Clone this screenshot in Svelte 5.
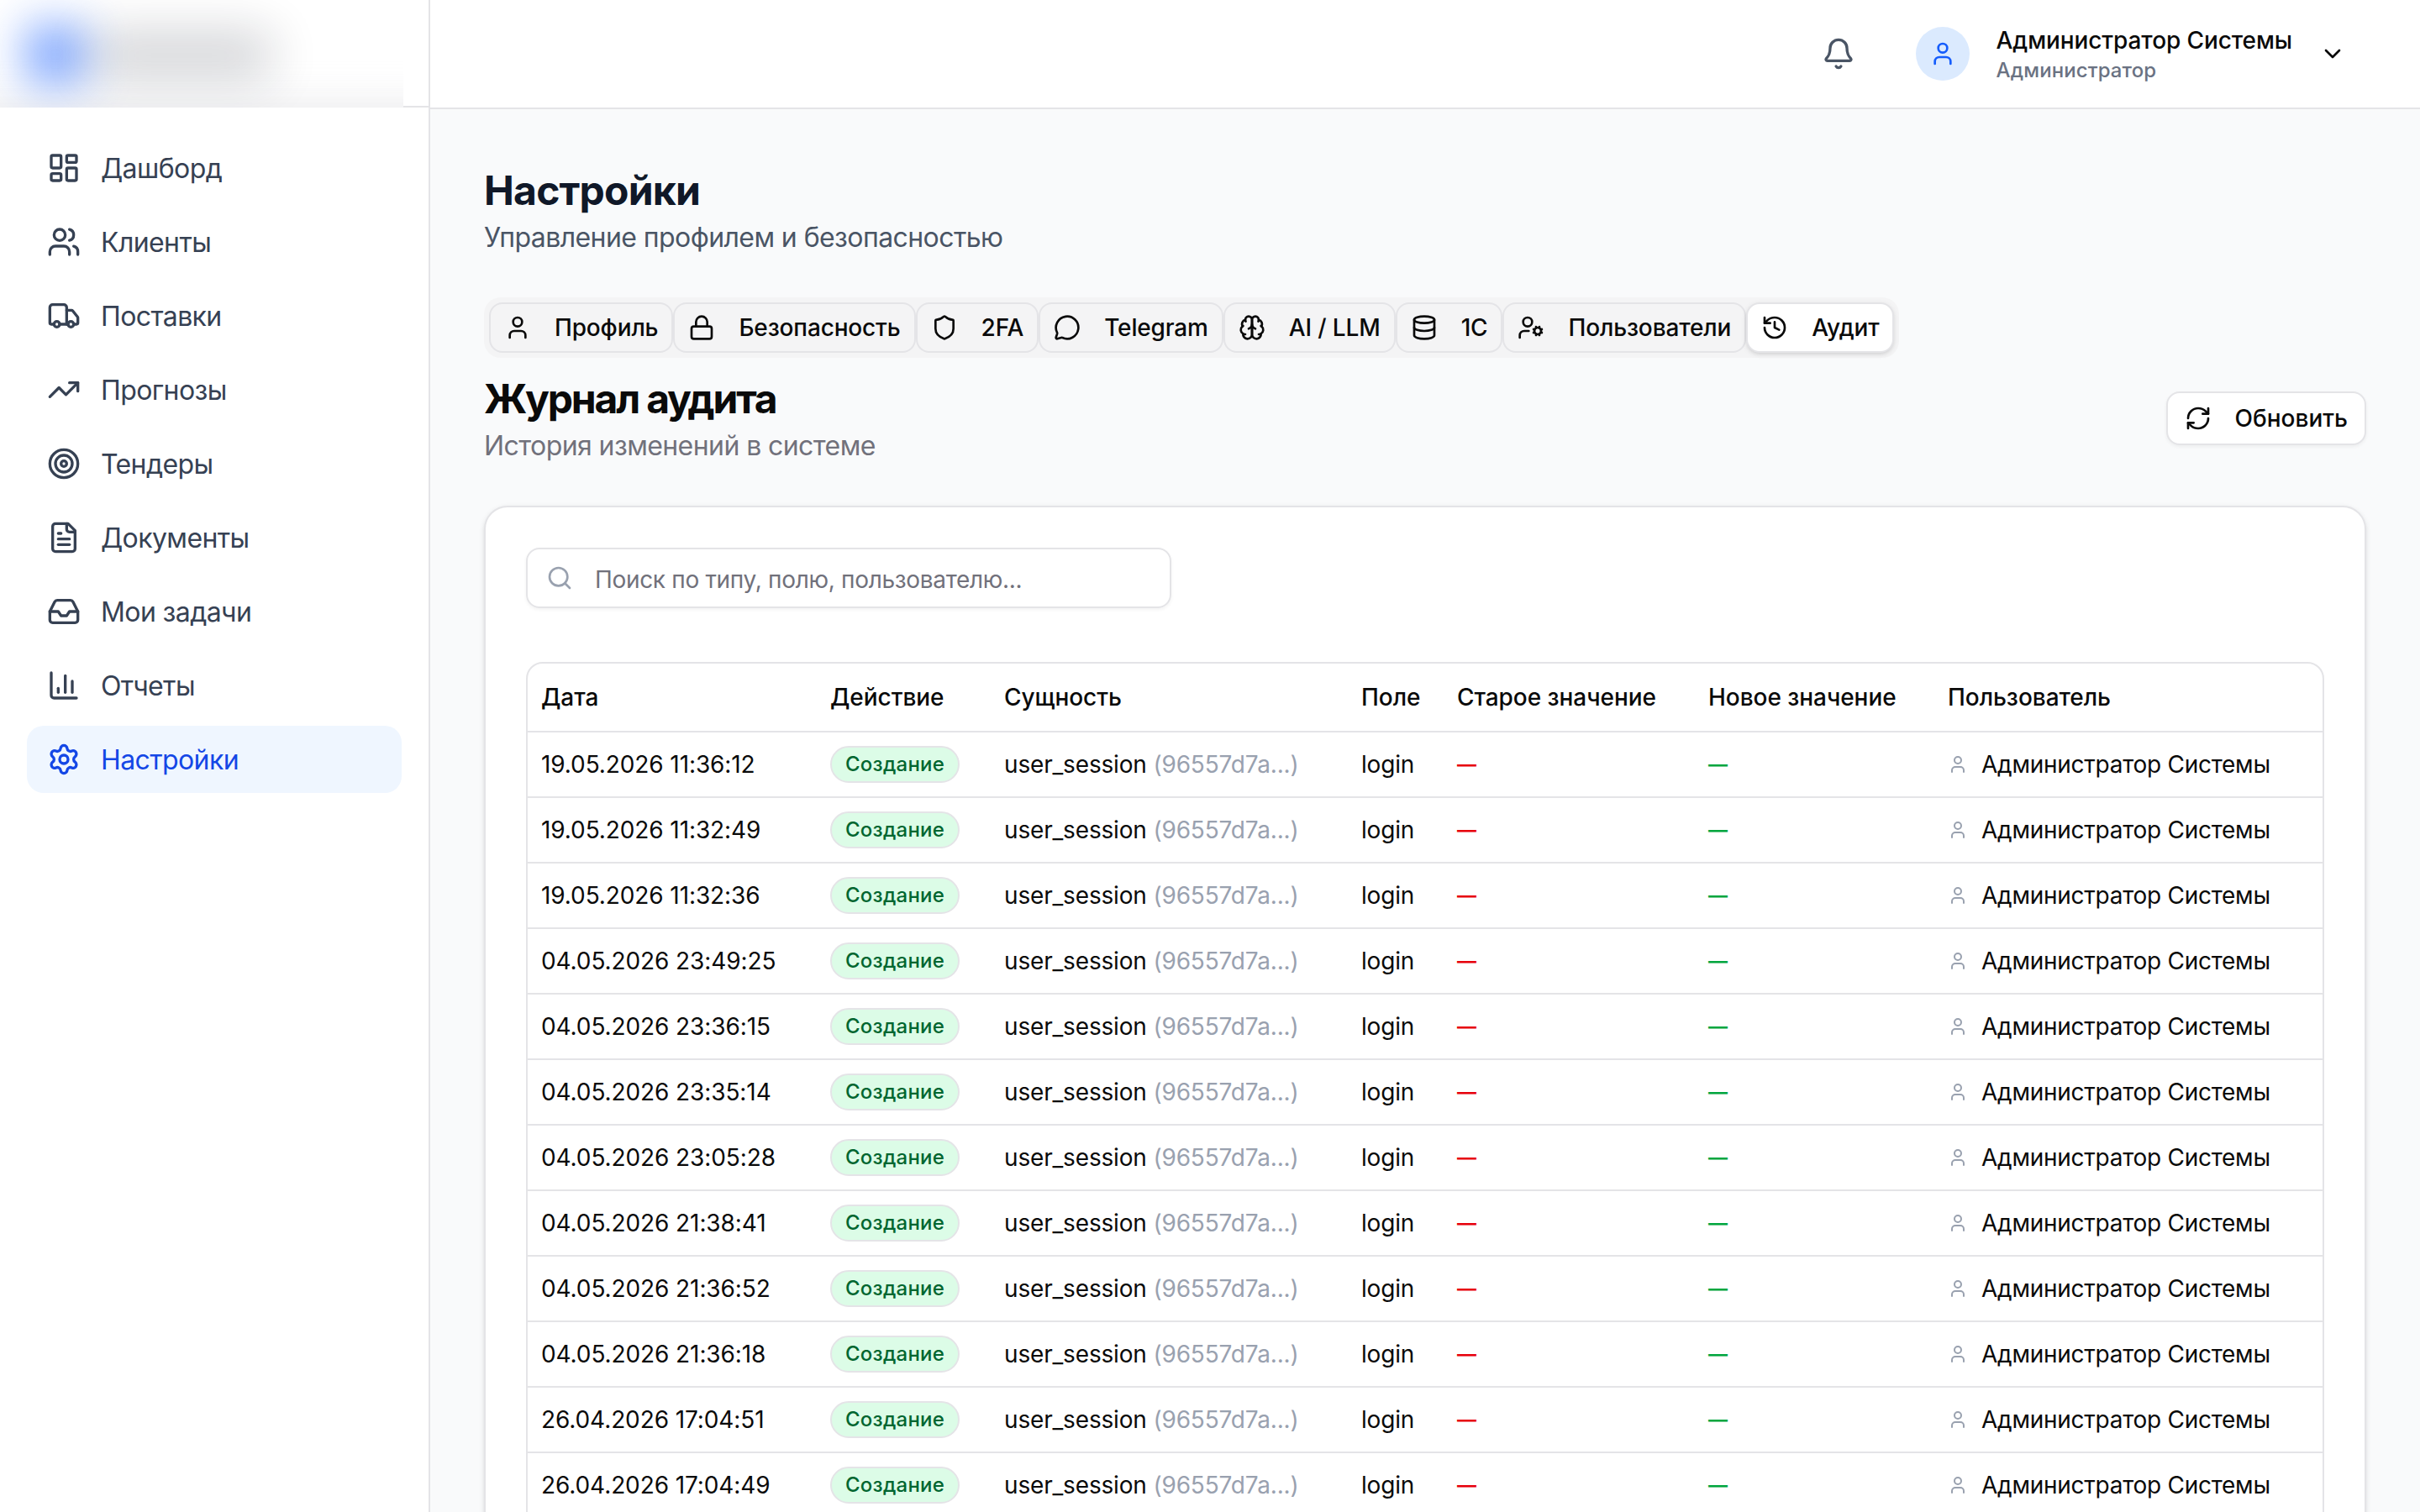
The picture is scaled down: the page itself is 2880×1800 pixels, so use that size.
<script lang="ts">
    type IconName = keyof typeof icons;

    const icons = {
        dashboard:
            '<rect width="7" height="9" x="3" y="3" rx="1"/><rect width="7" height="5" x="14" y="3" rx="1"/><rect width="7" height="9" x="14" y="12" rx="1"/><rect width="7" height="5" x="3" y="16" rx="1"/>',
        users: '<path d="M16 21v-2a4 4 0 0 0-4-4H6a4 4 0 0 0-4 4v2"/><path d="M16 3.128a4 4 0 0 1 0 7.744"/><path d="M22 21v-2a4 4 0 0 0-3-3.87"/><circle cx="9" cy="7" r="4"/>',
        truck: '<path d="M14 18V6a2 2 0 0 0-2-2H4a2 2 0 0 0-2 2v11a1 1 0 0 0 1 1h2"/><path d="M15 18H9"/><path d="M19 18h2a1 1 0 0 0 1-1v-3.65a1 1 0 0 0-.22-.624l-3.48-4.35A1 1 0 0 0 17.52 8H14"/><circle cx="17" cy="18" r="2"/><circle cx="7" cy="18" r="2"/>',
        trending: '<path d="M16 7h6v6"/><path d="m22 7-8.5 8.5-5-5L2 17"/>',
        target: '<circle cx="12" cy="12" r="10"/><circle cx="12" cy="12" r="6"/><circle cx="12" cy="12" r="2"/>',
        file: '<path d="M15 2H6a2 2 0 0 0-2 2v16a2 2 0 0 0 2 2h12a2 2 0 0 0 2-2V7Z"/><path d="M14 2v4a2 2 0 0 0 2 2h4"/><path d="M10 9H8"/><path d="M16 13H8"/><path d="M16 17H8"/>',
        inbox: '<path d="M22 12h-6l-2 3h-4l-2-3H2"/><path d="M5.45 5.11 2 12v6a2 2 0 0 0 2 2h16a2 2 0 0 0 2-2v-6l-3.45-6.89A2 2 0 0 0 16.76 4H7.24a2 2 0 0 0-1.79 1.11z"/>',
        chart: '<path d="M3 3v16a2 2 0 0 0 2 2h16"/><path d="M18 17V9"/><path d="M13 17V5"/><path d="M8 17v-3"/>',
        settings:
            '<path d="M9.671 4.136a2.34 2.34 0 0 1 4.659 0 2.34 2.34 0 0 0 3.319 1.915 2.34 2.34 0 0 1 2.33 4.033 2.34 2.34 0 0 0 0 3.831 2.34 2.34 0 0 1-2.33 4.033 2.34 2.34 0 0 0-3.319 1.915 2.34 2.34 0 0 1-4.659 0 2.34 2.34 0 0 0-3.32-1.915 2.34 2.34 0 0 1-2.33-4.033 2.34 2.34 0 0 0 0-3.831A2.34 2.34 0 0 1 6.35 6.051a2.34 2.34 0 0 0 3.319-1.915"/><circle cx="12" cy="12" r="3"/>',
        bell: '<path d="M10.268 21a2 2 0 0 0 3.464 0"/><path d="M3.262 15.326A1 1 0 0 0 4 17h16a1 1 0 0 0 .74-1.673C19.41 13.956 18 12.499 18 8A6 6 0 0 0 6 8c0 4.499-1.411 5.956-2.738 7.326"/>',
        user: '<path d="M19 21v-2a4 4 0 0 0-4-4H9a4 4 0 0 0-4 4v2"/><circle cx="12" cy="7" r="4"/>',
        chevron: '<path d="m6 9 6 6 6-6"/>',
        lock: '<rect width="18" height="11" x="3" y="11" rx="2"/><path d="M7 11V7a5 5 0 0 1 10 0v4"/>',
        shield: '<path d="M20 13c0 5-3.5 7.5-7.66 8.95a1 1 0 0 1-.67-.01C7.5 20.5 4 18 4 13V6a1 1 0 0 1 1-1c2 0 4.5-1.2 6.24-2.72a1.17 1.17 0 0 1 1.52 0C14.51 3.81 17 5 19 5a1 1 0 0 1 1 1z"/>',
        message:
            '<path d="M2.992 16.342a2 2 0 0 1 .094 1.167l-1.065 3.29a1 1 0 0 0 1.236 1.168l3.413-.998a2 2 0 0 1 1.099.092 10 10 0 1 0-4.777-4.719"/>',
        brain: '<path d="M12 5a3 3 0 1 0-5.997.125 4 4 0 0 0-2.526 5.77 4 4 0 0 0 .556 6.588A4 4 0 1 0 12 18Z"/><path d="M12 5a3 3 0 1 1 5.997.125 4 4 0 0 1 2.526 5.77 4 4 0 0 1-.556 6.588A4 4 0 1 1 12 18Z"/><path d="M15 13a4.5 4.5 0 0 1-3-4 4.5 4.5 0 0 1-3 4"/><path d="M17.599 6.5a3 3 0 0 0 .399-1.375"/><path d="M6.003 5.125A3 3 0 0 0 6.401 6.5"/><path d="M3.477 10.896a4 4 0 0 1 .585-.396"/><path d="M19.938 10.5a4 4 0 0 1 .585.396"/><path d="M6 18a4 4 0 0 1-1.967-.516"/><path d="M19.967 17.484A4 4 0 0 1 18 18"/>',
        database:
            '<ellipse cx="12" cy="5" rx="9" ry="3"/><path d="M3 5V19A9 3 0 0 0 21 19V5"/><path d="M3 12A9 3 0 0 0 21 12"/>',
        userCog:
            '<path d="M10 15H6a4 4 0 0 0-4 4v2"/><path d="m14.305 16.53.923-.382"/><path d="m15.228 13.852-.923-.383"/><path d="m16.852 12.228-.383-.923"/><path d="m16.852 17.772-.383.924"/><path d="m19.148 12.228.383-.923"/><path d="m19.53 18.696-.382-.924"/><path d="m20.772 13.852.924-.383"/><path d="m20.772 16.148.924.383"/><circle cx="18" cy="15" r="3"/><circle cx="9" cy="7" r="4"/>',
        history:
            '<path d="M3 12a9 9 0 1 0 9-9 9.75 9.75 0 0 0-6.74 2.74L3 8"/><path d="M3 3v5h5"/><path d="M12 7v5l4 2"/>',
        refresh:
            '<path d="M3 12a9 9 0 0 1 9-9 9.75 9.75 0 0 1 6.74 2.74L21 8"/><path d="M21 3v5h-5"/><path d="M21 12a9 9 0 0 1-9 9 9.75 9.75 0 0 1-6.74-2.74L3 16"/><path d="M8 16H3v5"/>',
        search: '<path d="m21 21-4.34-4.34"/><circle cx="11" cy="11" r="8"/>',
    };

    const nav: { icon: IconName; label: string }[] = [
        { icon: "dashboard", label: "Дашборд" },
        { icon: "users", label: "Клиенты" },
        { icon: "truck", label: "Поставки" },
        { icon: "trending", label: "Прогнозы" },
        { icon: "target", label: "Тендеры" },
        { icon: "file", label: "Документы" },
        { icon: "inbox", label: "Мои задачи" },
        { icon: "chart", label: "Отчеты" },
        { icon: "settings", label: "Настройки" },
    ];

    const tabs: { icon: IconName; label: string }[] = [
        { icon: "user", label: "Профиль" },
        { icon: "lock", label: "Безопасность" },
        { icon: "shield", label: "2FA" },
        { icon: "message", label: "Telegram" },
        { icon: "brain", label: "AI / LLM" },
        { icon: "database", label: "1С" },
        { icon: "userCog", label: "Пользователи" },
        { icon: "history", label: "Аудит" },
    ];

    const dates = [
        "19.05.2026 11:36:12",
        "19.05.2026 11:32:49",
        "19.05.2026 11:32:36",
        "04.05.2026 23:49:25",
        "04.05.2026 23:36:15",
        "04.05.2026 23:35:14",
        "04.05.2026 23:05:28",
        "04.05.2026 21:38:41",
        "04.05.2026 21:36:52",
        "04.05.2026 21:36:18",
        "26.04.2026 17:04:51",
        "26.04.2026 17:04:49",
    ];

    const entries = dates.map((date, id) => ({
        id,
        date,
        action: "Создание",
        entity: "user_session",
        entityId: "96557d7a",
        field: "login",
        user: "Администратор Системы",
    }));

    let activePage = $state("Настройки");
    let activeTab = $state("Аудит");
    let query = $state("");

    let filtered = $derived(
        entries.filter((e) =>
            [e.entity, e.field, e.user].some((v) =>
                v.toLowerCase().includes(query.toLowerCase()),
            ),
        ),
    );
</script>

{#snippet icon(name: IconName)}
    <svg class="icon" viewBox="0 0 24 24" aria-hidden="true">
        {@html icons[name]}
    </svg>
{/snippet}

<div class="app">
    <aside>
        <div class="brand">
            <div class="brand-blur">
                <span class="brand-line"></span>
                <span class="brand-mark"></span>
                <span class="brand-name"></span>
            </div>
        </div>
        <nav>
            {#each nav as item (item.label)}
                <button
                    class="nav-item"
                    class:active={item.label === activePage}
                    onclick={() => (activePage = item.label)}
                >
                    {@render icon(item.icon)}
                    <span>{item.label}</span>
                </button>
            {/each}
        </nav>
    </aside>

    <div class="page">
        <header>
            <button class="bell" aria-label="Уведомления">{@render icon("bell")}</button>
            <button class="account">
                <span class="avatar">{@render icon("user")}</span>
                <span class="who">
                    <span class="name">Администратор Системы</span>
                    <span class="role">Администратор</span>
                </span>
                {@render icon("chevron")}
            </button>
        </header>

        <main>
            <div>
                <h1>Настройки</h1>
                <p class="lead">Управление профилем и безопасностью</p>
            </div>

            <div class="tabs">
                <div class="tab-list">
                    {#each tabs as tab (tab.label)}
                        <button
                            class="tab"
                            class:active={tab.label === activeTab}
                            onclick={() => (activeTab = tab.label)}
                        >
                            {@render icon(tab.icon)}
                            {tab.label}
                        </button>
                    {/each}
                </div>

                <section>
                    <div class="section-head">
                        <div>
                            <h2>Журнал аудита</h2>
                            <p class="muted">История изменений в системе</p>
                        </div>
                        <button class="refresh">
                            {@render icon("refresh")}
                            Обновить
                        </button>
                    </div>

                    <div class="card">
                        <label class="search">
                            {@render icon("search")}
                            <input
                                type="text"
                                placeholder="Поиск по типу, полю, пользователю..."
                                bind:value={query}
                            />
                        </label>

                        <div class="table-wrap">
                            <table>
                                <thead>
                                    <tr>
                                        <th class="c-date">Дата</th>
                                        <th class="c-action">Действие</th>
                                        <th class="c-entity">Сущность</th>
                                        <th class="c-field">Поле</th>
                                        <th class="c-old">Старое значение</th>
                                        <th class="c-new">Новое значение</th>
                                        <th>Пользователь</th>
                                    </tr>
                                </thead>
                                <tbody>
                                    {#each filtered as entry (entry.id)}
                                        <tr>
                                            <td class="date">{entry.date}</td>
                                            <td><span class="badge">{entry.action}</span></td>
                                            <td>
                                                {entry.entity}
                                                <span class="id">({entry.entityId}...)</span>
                                            </td>
                                            <td>{entry.field}</td>
                                            <td class="old">—</td>
                                            <td class="new">—</td>
                                            <td>
                                                <div class="user">
                                                    {@render icon("user")}
                                                    {entry.user}
                                                </div>
                                            </td>
                                        </tr>
                                    {/each}
                                </tbody>
                            </table>
                        </div>
                    </div>
                </section>
            </div>
        </main>
    </div>
</div>

<style>
    :global(body) {
        overflow: hidden;
    }

    .app {
        display: flex;
        height: 1800px;
        overflow: hidden;
        background: #f9fafb;
        color: #0a0a0a;
        font-family: Inter, "Liberation Sans", sans-serif;
        font-size: 28px;
        line-height: 40px;
        -webkit-font-smoothing: antialiased;
    }

    .app * {
        box-sizing: border-box;
    }

    button {
        display: flex;
        align-items: center;
        border: none;
        background: none;
        color: inherit;
        font: inherit;
        font-weight: 500;
        white-space: nowrap;
        cursor: pointer;
    }

    h1,
    h2,
    p {
        margin: 0;
    }

    .icon {
        flex: none;
        width: 32px;
        height: 32px;
        fill: none;
        stroke: currentColor;
        stroke-width: 2;
        stroke-linecap: round;
        stroke-linejoin: round;
    }

    /* sidebar */
    aside {
        flex: none;
        width: 512px;
        border-right: 2px solid #e4e4e7;
        background: #fff;
    }

    .brand {
        height: 128px;
        border-bottom: 2px solid #e4e4e7;
    }

    .brand-blur {
        position: relative;
        width: 480px;
        height: 128px;
        overflow: hidden;
        background: #fff;
    }

    .brand-blur span {
        position: absolute;
    }

    .brand-mark {
        left: 33px;
        top: 32px;
        width: 66px;
        height: 66px;
        background: #155dfc;
        opacity: 0.64;
        filter: blur(28px);
    }

    .brand-name {
        left: 110px;
        top: 38px;
        width: 212px;
        height: 56px;
        background: #101828;
        opacity: 0.19;
        filter: blur(29px);
    }

    .brand-line {
        left: -100px;
        top: 126px;
        width: 700px;
        height: 60px;
        background: #e4e4e7;
        opacity: 0.85;
        filter: blur(24px);
    }

    nav {
        display: flex;
        flex-direction: column;
        gap: 8px;
        padding: 32px;
    }

    .nav-item {
        gap: 24px;
        height: 80px;
        padding: 0 24px;
        border-radius: 20px;
        color: #364153;
        font-size: 32px;
        font-weight: 400;
        letter-spacing: -0.6px;
    }

    .nav-item span {
        padding-top: 2px;
    }

    .nav-item .icon {
        width: 40px;
        height: 40px;
    }

    .nav-item.active {
        background: #eff6ff;
        color: #1447e6;
    }

    /* top bar */
    .page {
        flex: 1;
        min-width: 0;
    }

    header {
        display: flex;
        justify-content: flex-end;
        align-items: center;
        gap: 32px;
        height: 130px;
        padding: 0 64px;
        border-bottom: 2px solid #e4e4e7;
        background: #fff;
    }

    .bell {
        justify-content: center;
        width: 72px;
        height: 72px;
        padding: 0;
        color: #4a5565;
    }

    .bell .icon {
        width: 40px;
        height: 40px;
    }

    .account {
        gap: 32px;
        padding: 0 24px;
    }

    .avatar {
        display: flex;
        align-items: center;
        justify-content: center;
        width: 64px;
        height: 64px;
        border-radius: 50%;
        background: #dbeafe;
        color: #155dfc;
    }

    .who {
        display: flex;
        flex-direction: column;
        text-align: left;
    }

    .name {
        letter-spacing: -0.1px;
    }

    .role {
        color: #6a7282;
        font-size: 24px;
        line-height: 32px;
        letter-spacing: 0.1px;
    }

    /* content */
    main {
        display: flex;
        flex-direction: column;
        gap: 48px;
        padding: 64px;
    }

    h1,
    h2 {
        height: 64px;
        padding-top: 1px;
        font-size: 48px;
        font-weight: 700;
        line-height: 64px;
    }

    h1 {
        color: #101828;
        letter-spacing: -0.8px;
    }

    h2 {
        letter-spacing: -2.2px;
    }

    .lead,
    .muted {
        height: 48px;
        padding-top: 1px;
        font-size: 32px;
        line-height: 48px;
        letter-spacing: -0.58px;
    }

    .lead {
        color: #4a5565;
    }

    .muted {
        color: #71717b;
    }

    .tabs {
        display: flex;
        flex-direction: column;
        gap: 16px;
    }

    .tab-list {
        display: flex;
        width: fit-content;
        height: 72px;
        padding: 6px;
        border-radius: 20px;
        background: #f4f4f5;
    }

    .tab {
        gap: 28px;
        padding: 0 16px;
        border: 2px solid #e4e4e7;
        border-radius: 16px;
        letter-spacing: -0.15px;
    }

    .tab.active {
        background: #fff;
        box-shadow:
            0 2px 6px rgba(0, 0, 0, 0.1),
            0 2px 4px -2px rgba(0, 0, 0, 0.1);
    }

    section {
        display: flex;
        flex-direction: column;
        gap: 48px;
    }

    .section-head {
        display: flex;
        align-items: center;
        justify-content: space-between;
    }

    .refresh {
        gap: 28px;
        height: 64px;
        padding: 0 20px;
        border: 2px solid #e4e4e7;
        border-radius: 16px;
        background: #fff;
        box-shadow: 0 2px 4px rgba(0, 0, 0, 0.05);
    }

    .card {
        display: flex;
        flex-direction: column;
        gap: 64px;
        padding: 48px;
        border: 2px solid #e4e4e7;
        border-radius: 28px;
        background: #fff;
        box-shadow:
            0 2px 6px rgba(0, 0, 0, 0.1),
            0 2px 4px -2px rgba(0, 0, 0, 0.1);
    }

    .search {
        display: flex;
        align-items: center;
        gap: 26px;
        width: 768px;
        height: 72px;
        padding: 0 22px;
        border: 2px solid #e4e4e7;
        border-radius: 16px;
        box-shadow: 0 2px 4px rgba(0, 0, 0, 0.05);
    }

    .search .icon {
        color: #99a1af;
    }

    .search input {
        flex: 1;
        min-width: 0;
        padding: 4px 0 0;
        border: none;
        outline: none;
        background: none;
        color: inherit;
        font: inherit;
        letter-spacing: -0.32px;
    }

    .search input::placeholder {
        color: #71717b;
        opacity: 1;
    }

    .table-wrap {
        overflow: hidden;
        border: 2px solid #e4e4e7;
        border-radius: 20px 20px 0 0;
    }

    table {
        width: 100%;
        border-collapse: separate;
        border-spacing: 0;
        table-layout: fixed;
    }

    th,
    td {
        height: 78px;
        padding: 0 16px;
        border-bottom: 2px solid #e4e4e7;
        text-align: left;
        vertical-align: middle;
        white-space: nowrap;
        letter-spacing: -0.17px;
    }

    th {
        height: 82px;
        font-weight: 500;
        letter-spacing: -0.05px;
    }

    .c-date {
        width: 344px;
    }

    .c-action {
        width: 207px;
    }

    .c-entity {
        width: 425px;
    }

    .c-field {
        width: 114px;
    }

    .c-old {
        width: 299px;
    }

    .c-new {
        width: 285px;
    }

    .date {
        letter-spacing: -0.1px;
    }

    .badge {
        display: flex;
        align-items: center;
        width: fit-content;
        height: 44px;
        padding: 0 16px;
        border: 2px solid #e4e4e7;
        border-radius: 22px;
        background: #dcfce7;
        color: #016630;
        font-size: 24px;
        font-weight: 500;
        line-height: 32px;
        letter-spacing: 0.25px;
    }

    .id {
        color: #99a1af;
    }

    .old,
    .new {
        font-size: 23px;
        font-weight: 600;
    }

    .old {
        color: #e7000b;
    }

    .new {
        color: #00a63e;
    }

    .user {
        display: flex;
        align-items: center;
        gap: 16px;
        letter-spacing: -0.26px;
    }

    .user .icon {
        width: 24px;
        height: 24px;
        color: #99a1af;
    }
</style>
